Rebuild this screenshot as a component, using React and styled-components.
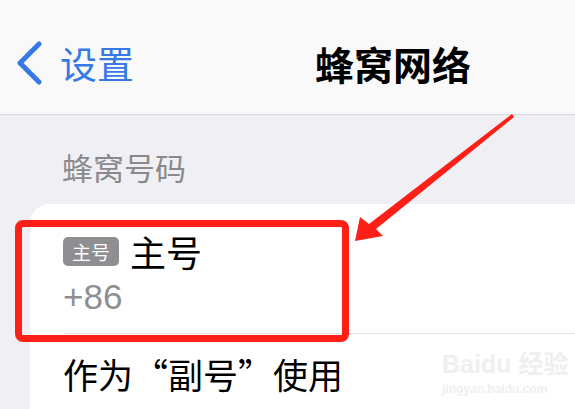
import React from 'react';
import styled, { createGlobalStyle } from 'styled-components';

const GlobalStyle = createGlobalStyle`
  html, body {
    margin: 0;
    padding: 0;
    background: #efeff4;
  }
  body {
    font-family: "Noto Sans CJK SC", "Noto Sans", "Liberation Sans", sans-serif;
  }
`;

const Screen = styled.div`
  position: relative;
  width: 575px;
  height: 409px;
  overflow: hidden;
  background: #efeff4;
`;

const NavBar = styled.div`
  display: flex;
  align-items: center;
  height: 115px;
  padding-top: 12px;
  box-sizing: border-box;
  background: #f9f9f9;
  border-bottom: 1px solid #d9d9dc;
`;

const BackButton = styled.div`
  display: flex;
  align-items: center;
  gap: 17px;
  padding-left: 15px;
  color: #3679e4;
  font-size: 37px;
  line-height: 1;
`;

const Title = styled.div`
  margin-left: 181px;
  font-size: 39px;
  font-weight: 700;
  color: #000;
  line-height: 1;
`;

const SectionHeader = styled.div`
  padding: 36px 0 0 62px;
  height: 53px;
  font-size: 31px;
  color: #8a8a8e;
  line-height: 1;
`;

const Card = styled.div`
  margin-left: 30px;
  background: #fff;
  border-top-left-radius: 20px;
`;

const Row = styled.div`
  margin-left: 33px;
  padding: ${p => p.$pad};
  border-bottom: ${p => (p.$divider ? '1px solid #e2e2e4' : 'none')};
`;

const LineTop = styled.div`
  display: flex;
  align-items: center;
  gap: 11px;
  height: 34px;
`;

const Badge = styled.span`
  display: inline-flex;
  align-items: center;
  justify-content: center;
  width: 56px;
  height: 29px;
  border-radius: 5px;
  background: #8e8e93;
  color: #fff;
  font-size: 19px;
  line-height: 1;
`;

const PrimaryText = styled.span`
  font-size: ${p => p.$size || 36}px;
  color: #000;
  line-height: 1;
  white-space: nowrap;
`;

const Number = styled.div`
  margin-top: 11px;
  font-family: "Liberation Sans", "Noto Sans", sans-serif;
  font-size: 35px;
  color: #8e8e93;
  line-height: 1;
`;

const Highlight = styled.div`
  position: absolute;
  left: 15px;
  top: 220px;
  width: 334px;
  height: 122px;
  box-sizing: border-box;
  border: 7px solid #fe1f17;
  border-radius: 8px;
`;

const Arrow = styled.svg`
  position: absolute;
  left: 0;
  top: 0;
  pointer-events: none;
`;

const Watermark = styled.div`
  position: absolute;
  left: 442px;
  top: 352px;
  color: #efefef;
  font-family: "Liberation Sans", "Noto Sans CJK SC", sans-serif;
  line-height: 1;
  white-space: nowrap;
`;

const WmMain = styled.div`
  font-size: 25px;
  font-weight: 700;
`;

const WmSub = styled.div`
  margin-top: 6px;
  font-size: 12px;
  font-weight: 700;
`;

export default function App() {
  return (
    <>
      <GlobalStyle />
      <Screen>
        <NavBar>
          <BackButton>
            <svg width="28" height="44" viewBox="0 0 28 44">
              <polyline
                points="24,3 5,22 24,41"
                fill="none"
                stroke="#3679e4"
                strokeWidth="5"
                strokeLinecap="round"
                strokeLinejoin="round"
              />
            </svg>
            <span>设置</span>
          </BackButton>
          <Title>蜂窝网络</Title>
        </NavBar>
        <SectionHeader>蜂窝号码</SectionHeader>
        <Card>
          <Row $divider $pad="30px 0 19px 0">
            <LineTop>
              <Badge>主号</Badge>
              <PrimaryText>主号</PrimaryText>
            </LineTop>
            <Number>+86</Number>
          </Row>
          <Row $pad="22px 0 30px 0">
            <PrimaryText $size={35}>作为“副号”使用</PrimaryText>
          </Row>
        </Card>
        <Watermark>
          <WmMain>Baidu 经验</WmMain>
          <WmSub>jingyan.baidu.com</WmSub>
        </Watermark>
        <Highlight />
        <Arrow width="575" height="409" viewBox="0 0 575 409">
          <polygon
            points="512,114 514,117 376,229 383,236 355,241 360,217 369,224"
            fill="#fe1f17"
          />
        </Arrow>
      </Screen>
    </>
  );
}
